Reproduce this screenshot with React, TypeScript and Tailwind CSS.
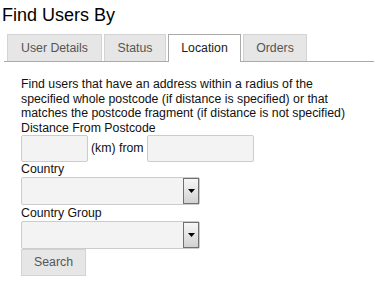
const TABS = [
  { label: 'User Details', width: 'w-[95px]' },
  { label: 'Status', width: 'w-[62px]' },
  { label: 'Location', width: 'w-[73px]', active: true },
  { label: 'Orders', width: 'w-[64px]' },
];

function SelectBox() {
  return (
    <div className="flex w-[179px] h-[28px] border border-[#cccccc] bg-[#f3f3f3] rounded-[2px]">
      <div className="ml-auto w-[16px] h-full flex items-center justify-center border border-[#707070] bg-linear-to-b from-[#f7f7f7] to-[#d2d2d2]">
        <svg width="7" height="4" viewBox="0 0 7 4">
          <polygon points="0,0 7,0 3.5,4" fill="#000" />
        </svg>
      </div>
    </div>
  );
}

export default function App() {
  return (
    <div className="w-[374px] h-[282px] bg-white font-['Liberation_Sans',Arial,sans-serif] text-[#111]">
      {/* Heading */}
      <h1 className="pl-[2px] pt-[5px] text-[18px] leading-[21px] text-black">Find Users By</h1>

      {/* Tabs */}
      <div className="mt-[8px] ml-[4px] pl-[3px] h-[28px] flex items-start gap-[2px] border-b border-[#aaaaaa]">
        {TABS.map((tab) => (
          <div
            key={tab.label}
            className={`${tab.width} flex items-center justify-center text-[12.3px] ${
              tab.active
                ? 'h-[28px] -mb-px bg-white border border-b-0 border-[#aaaaaa] text-[#212121]'
                : 'h-[27px] bg-[#e6e6e6] border border-b-0 border-[#d3d3d3] text-[#555555]'
            }`}
          >
            {tab.label}
          </div>
        ))}
      </div>

      {/* Panel */}
      <div className="pl-[21px] pt-[15px] text-[12.3px] leading-[14.5px]">
        <p className="w-[340px]">
          Find users that have an address within a radius of the specified whole postcode (if distance is
          specified) or that matches the postcode fragment (if distance is not specified)
        </p>
        <div>Distance From Postcode</div>

        <div className="flex items-center gap-[3px] h-[27px]">
          <div className="w-[67px] h-[27px] border border-[#cccccc] bg-[#f3f3f3] rounded-[2px]" />
          <span>(km) from</span>
          <div className="w-[107px] h-[27px] border border-[#cccccc] bg-[#f3f3f3] rounded-[2px]" />
        </div>

        <div className="h-[15px] leading-[15px]">Country</div>
        <SelectBox />
        <div className="h-[16px] leading-[16px]">Country Group</div>
        <SelectBox />

        <button className="w-[65px] h-[27px] bg-[#e6e6e6] border border-[#d3d3d3] text-[#555555] text-[12.3px]">
          Search
        </button>
      </div>
    </div>
  );
}
